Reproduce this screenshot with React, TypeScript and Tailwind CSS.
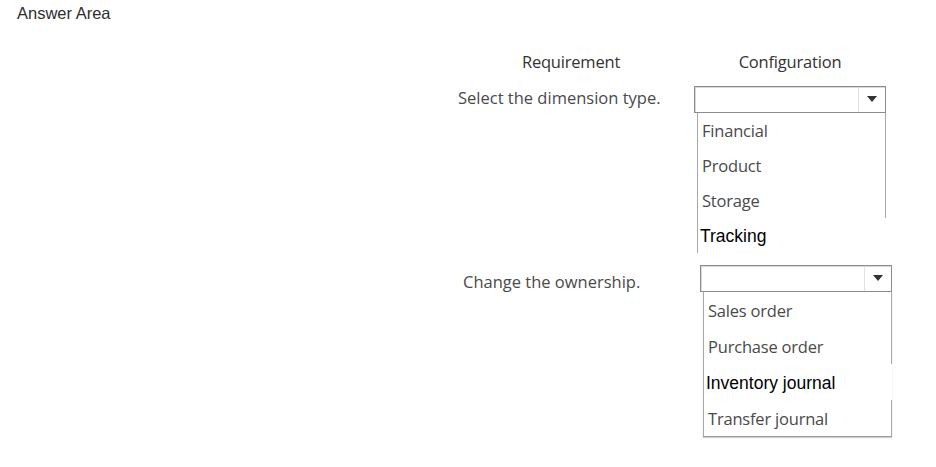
import React from 'react';

type Option = { label: string; plain?: boolean };

const dimensionOptions: Option[] = [
  { label: 'Financial' },
  { label: 'Product' },
  { label: 'Storage' },
  { label: 'Tracking', plain: true },
];

const ownershipOptions: Option[] = [
  { label: 'Sales order' },
  { label: 'Purchase order' },
  { label: 'Inventory journal', plain: true },
  { label: 'Transfer journal' },
];

const ui = "font-['Open_Sans','Noto_Sans',sans-serif]";
const arial = "font-['Liberation_Sans',Arial,sans-serif]";

const Caret: React.FC = () => (
  <svg width="10" height="6" viewBox="0 0 10 6">
    <path d="M0 0 L10 0 L5 6 Z" fill="#333" />
  </svg>
);

// Closed select box with its option list hanging underneath
const Dropdown: React.FC<{ options: Option[]; last?: boolean }> = ({ options, last }) => (
  <div className="w-[192px]">
    <div className="flex h-[27px] border border-[#8c8c8c] bg-white shadow-[inset_1px_1px_0_#d8d8d8]">
      <div className="flex-1" />
      <div className="flex w-[27px] items-center justify-center border-l border-[#e2e2e2]">
        <Caret />
      </div>
    </div>
    <div className={`ml-[3px] ${last ? 'border-b border-[#9a9a9a] shadow-[0_1px_1px_#d0d0d0]' : ''}`}>
      {options.map((o) => (
        <div
          key={o.label}
          className={`flex items-center border-l border-[#a8a8a8] ${last ? 'h-[36px]' : 'h-[35px]'} ${
            o.plain
              ? `pl-[2px] pt-[3px] text-[17.5px] text-black ${arial}`
              : `border-r pl-[4px] pt-[3px] text-[16.5px] tracking-[-0.2px] text-[#4a4a4a] ${ui}`
          }`}
        >
          {o.label}
        </div>
      ))}
    </div>
  </div>
);

const App: React.FC = () => {
  return (
    <div className="h-[467px] w-[936px] overflow-hidden bg-white">
      <div className={`pl-[17px] pt-[1px] text-[16.5px] font-medium text-[#2e2e2e] ${arial}`}>
        Answer Area
      </div>

      <div className={`ml-[440px] mt-[24px] ${ui}`}>
        <div className="flex text-[16.5px] tracking-[-0.2px] text-[#333]">
          <div className="w-[262px] text-center">Requirement</div>
          <div className="w-[176px] text-center">Configuration</div>
        </div>

        <div className="mt-[11px] flex">
          <div className="w-[254px] pl-[18px] text-[16.5px] text-[#4a4a4a]">Select the dimension type.</div>
          <Dropdown options={dimensionOptions} />
        </div>

        <div className="mt-[12px] flex">
          <div className="w-[260px] pl-[23px] pt-[5px] text-[16.5px] text-[#4a4a4a]">Change the ownership.</div>
          <Dropdown options={ownershipOptions} last />
        </div>
      </div>
    </div>
  );
};

export default App;
